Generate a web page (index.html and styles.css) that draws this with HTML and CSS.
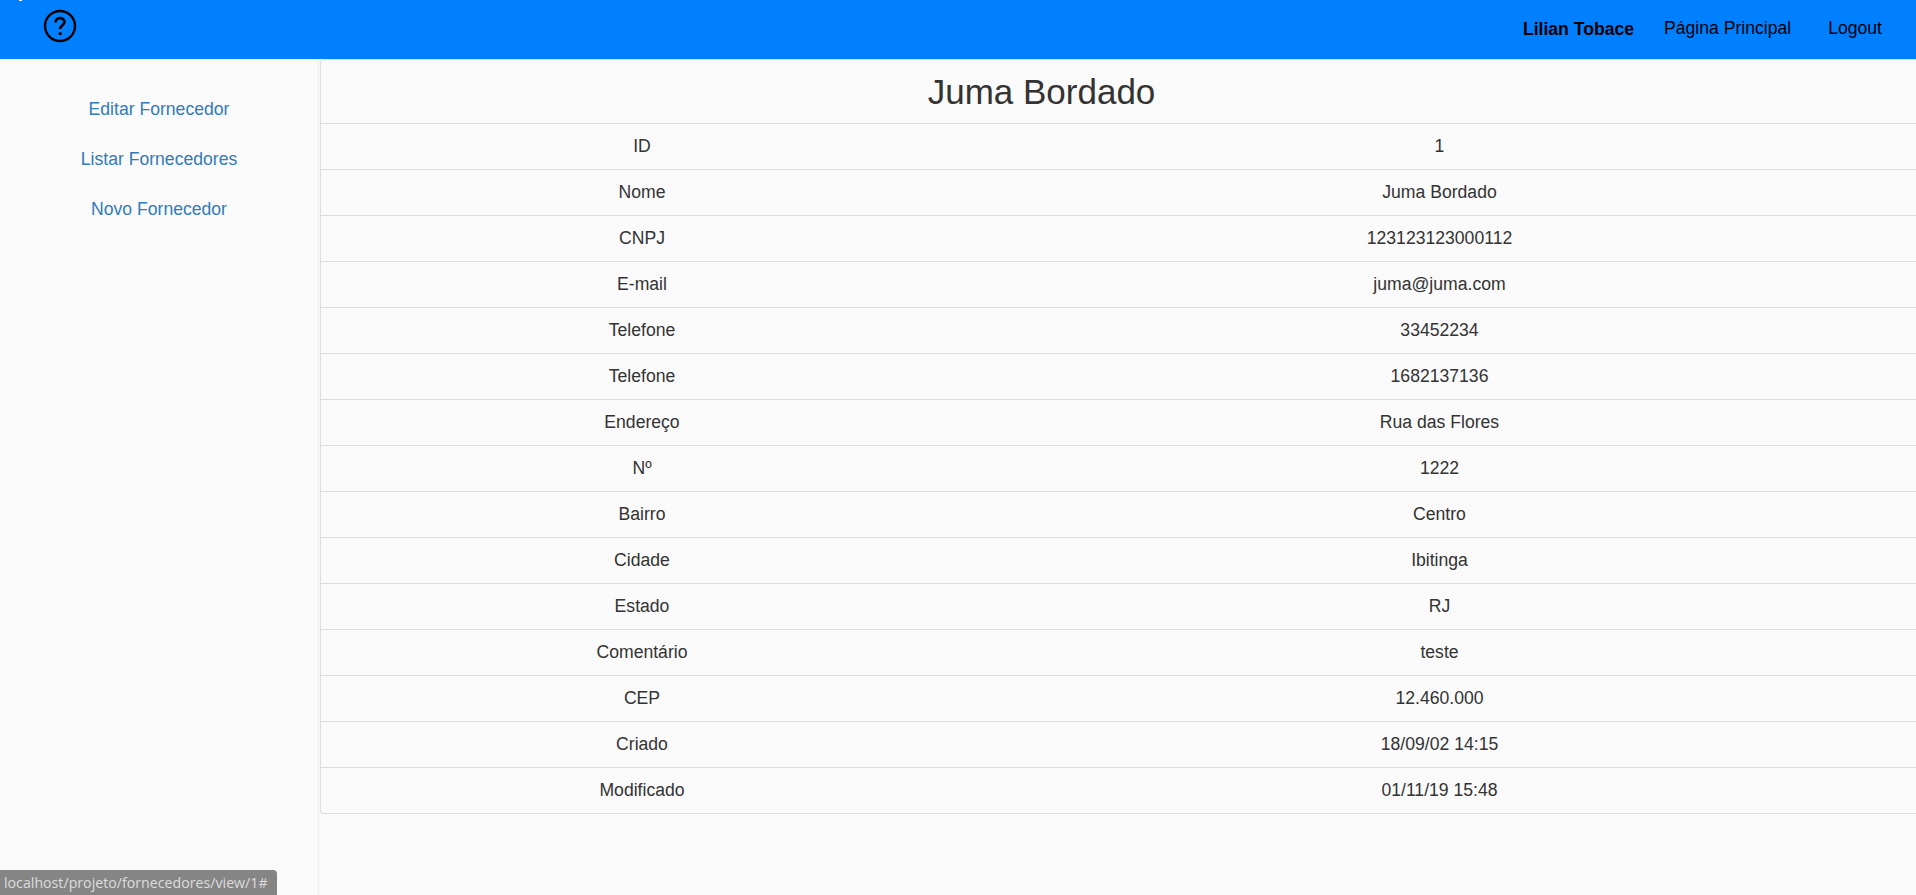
FILE: index.html
```html
<!DOCTYPE html>
<html lang="pt-BR">
<head>
    <meta charset="UTF-8">
    <meta name="viewport" content="width=device-width, initial-scale=1.0">
    <title>Juma Bordado</title>
    <link rel="stylesheet" href="styles.css">
</head>
<body>
    <span class="corner-mark"></span>
    <nav class="topbar">
        <a class="help-link" href="#" aria-label="Ajuda">
            <svg width="34" height="34" viewBox="0 0 34 34" fill="none">
                <circle cx="17" cy="17" r="15" stroke="#000" stroke-width="2.4"/>
                <path d="M12.6 13.4c0-2.6 2-4.2 4.500-4.200s4.400 1.600 4.400 3.900c0 3.200-4.300 3.300-4.300 6.900" stroke="#000" stroke-width="2.700"/>
                <circle cx="17.200" cy="24.600" r="1.700" fill="#000"/>
            </svg>
        </a>
        <ul class="topbar-menu">
            <li class="user-name">Lilian Tobace</li>
            <li><a href="#">Página Principal</a></li>
            <li class="logout"><a href="#">Logout</a></li>
        </ul>
    </nav>

    <div class="page">
        <aside class="sidebar">
            <a href="#">Editar Fornecedor</a>
            <a href="#">Listar Fornecedores</a>
            <a href="#">Novo Fornecedor</a>
        </aside>

        <main class="content">
            <div class="panel">
                <h1>Juma Bordado</h1>
                <table class="details">
                    <tr><th>ID</th><td>1</td></tr>
                    <tr><th>Nome</th><td>Juma Bordado</td></tr>
                    <tr><th>CNPJ</th><td>123123123000112</td></tr>
                    <tr><th>E-mail</th><td>juma@juma.com</td></tr>
                    <tr><th>Telefone</th><td>33452234</td></tr>
                    <tr><th>Telefone</th><td>1682137136</td></tr>
                    <tr><th>Endereço</th><td>Rua das Flores</td></tr>
                    <tr><th>Nº</th><td>1222</td></tr>
                    <tr><th>Bairro</th><td>Centro</td></tr>
                    <tr><th>Cidade</th><td>Ibitinga</td></tr>
                    <tr><th>Estado</th><td>RJ</td></tr>
                    <tr><th>Comentário</th><td>teste</td></tr>
                    <tr><th>CEP</th><td>12.460.000</td></tr>
                    <tr><th>Criado</th><td>18/09/02 14:15</td></tr>
                    <tr><th>Modificado</th><td>01/11/19 15:48</td></tr>
                </table>
            </div>
        </main>
    </div>

    <div class="status-link">localhost/projeto/fornecedores/view/1#</div>
</body>
</html>
```

FILE: styles.css
```css
html, body {
    height: 100%;
}
body {
    margin: 0;
    background-color: #fafafa;
    color: #333;
    font-family: "Liberation Sans", Arial, sans-serif;
    font-size: 17.6px;
    overflow: hidden;
}
a {
    text-decoration: none;
}
.corner-mark {
    position: absolute;
    left: 19px;
    top: 0;
    width: 3px;
    height: 1px;
    background-color: #fff;
}
.topbar {
    height: 59px;
    background-color: #007fff;
    display: flex;
    align-items: center;
    justify-content: space-between;
    padding: 0 34px 0 43px;
}
.help-link {
    display: flex;
    margin-bottom: 8px;
}
.topbar-menu {
    display: flex;
    align-items: center;
    gap: 30px;
    list-style: none;
    margin: 0 0 2px;
    padding: 0;
}
.topbar-menu a {
    color: #000;
}
.user-name {
    font-weight: bold;
    color: #000;
    margin-top: 1px;
}
.logout {
    margin-left: 7px;
}
.page {
    display: flex;
    height: calc(100% - 59px);
}
.sidebar {
    width: 319px;
    flex-shrink: 0;
    box-sizing: border-box;
    border-right: 1px solid #eee;
    padding-top: 40px;
    display: flex;
    flex-direction: column;
    align-items: center;
    gap: 30px;
    line-height: 20px;
}
.sidebar a {
    color: #337ab7;
}
.content {
    flex: 1;
    min-width: 0;
    padding-left: 1px;
}
.panel {
    border: 1px solid #ddd;
    border-right: none;
    border-radius: 4px 0 0 4px;
}
h1 {
    margin: 0;
    height: 63px;
    line-height: 63px;
    padding-right: 154px;
    font-size: 35px;
    font-weight: 400;
    text-align: center;
}
.details {
    width: 100%;
    border-collapse: separate;
    border-spacing: 0;
    table-layout: fixed;
}
.details th, .details td {
    height: 45px;
    padding: 0;
    border-top: 1px solid #ddd;
    font-weight: 400;
    text-align: center;
    vertical-align: middle;
}
.details th {
    width: 642px;
}
.status-link {
    position: absolute;
    left: 0;
    bottom: 0;
    background-color: #858585;
    color: #ddd;
    font-family: "Open Sans", sans-serif;
    font-size: 14.2px;
    line-height: 25px;
    padding: 0 9px 0 4px;
    border-top-right-radius: 4px;
}
```
